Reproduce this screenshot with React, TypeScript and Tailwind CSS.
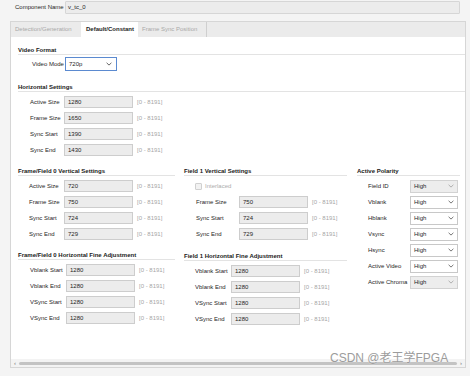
import React from "react"

const range = "[0 - 8191]"

function Chevron({ color = "#6b6b6b" }: { color?: string }) {
    return (
        <svg width="6" height="4" viewBox="0 0 6 4" className="shrink-0">
            <path d="M0.6 0.8 L3 3.1 L5.4 0.8" fill="none" stroke={color} strokeWidth="0.9" />
        </svg>
    )
}

function Title({ children, className = "" }: { children: React.ReactNode; className?: string }) {
    return (
        <div className={"h-[9px] leading-[8px] text-[6px] font-bold text-[#1a1a1a] border-b border-[#e3e3e3] whitespace-nowrap " + className}>
            {children}
        </div>
    )
}

function Field({ label, value, labelW, pl = "pl-[12px]" }: { label: string; value: string; labelW: string; pl?: string }) {
    return (
        <div className={"flex items-center h-[12px] " + pl}>
            <span className={"text-[6px] text-[#262626] whitespace-nowrap " + labelW}>{label}</span>
            <div className="w-[69px] h-[12px] bg-[#ececec] border border-[#cdcdcd] flex items-center pl-[3px] text-[6px] text-[#1e1e1e]">
                {value}
            </div>
            <span className="ml-[4px] text-[6px] text-[#a6a6a6] whitespace-nowrap">{range}</span>
        </div>
    )
}

function Polarity({ label, disabled }: { label: string; disabled?: boolean }) {
    return (
        <div className="flex items-center h-[12px] pl-[11px]">
            <span className="w-[42px] text-[6px] text-[#262626] whitespace-nowrap">{label}</span>
            <div
                className={
                    "w-[48px] h-[13px] border flex items-center justify-between pl-[3px] pr-[3px] text-[6px] text-[#1e1e1e] " +
                    (disabled ? "bg-[#ededed] border-[#d2d2d2]" : "bg-white border-[#c8c8c8]")
                }
            >
                <span>High</span>
                <Chevron color={disabled ? "#a8a8a8" : "#666"} />
            </div>
        </div>
    )
}

export default function App() {
    return (
        <div className="relative w-[470px] h-[376px] overflow-hidden bg-[#f4f4f4] font-['Liberation_Sans',Arial,sans-serif]">
            {/* component name */}
            <div className="flex items-center h-[14px] pl-[15px] pr-[10px]">
                <span className="w-[50px] text-[6px] text-[#262626] whitespace-nowrap">Component Name</span>
                <div className="flex-1 h-[13px] bg-[#ececec] border border-[#d6d6d6] rounded-[1px] flex items-center pl-[2px] text-[6px] text-[#1e1e1e]">
                    v_tc_0
                </div>
            </div>

            {/* tab panel */}
            <div className="mt-[7px] ml-[10px] w-[456px] border border-[#d6d6d6] bg-white">
                <div className="flex h-[15px] bg-[#ebebeb] text-[6px]">
                    <div className="w-[70px] flex items-center pl-[4px] text-[#a9a9a9] whitespace-nowrap">Detection/Generation</div>
                    <div className="w-[57px] flex items-center pl-[5px] bg-white font-bold text-[#1e1e1e] whitespace-nowrap">Default/Constant</div>
                    <div className="w-[69px] flex items-center pl-[4px] text-[#a9a9a9] border-r border-[#cfcfcf] whitespace-nowrap">Frame Sync Position</div>
                </div>

                <div className="h-[322px] pl-[7px] pt-[9px] flex flex-col">
                    <Title>Video Format</Title>
                    <div className="mt-[2px] flex items-center pl-[14px]">
                        <span className="w-[33px] text-[6px] text-[#262626] whitespace-nowrap">Video Mode</span>
                        <div className="w-[52px] h-[14px] border border-[#5b8ad0] bg-white flex items-center justify-between pl-[3px] pr-[4px] text-[6px] text-[#1e1e1e]">
                            <span>720p</span>
                            <Chevron color="#555" />
                        </div>
                    </div>

                    <Title className="mt-[12px]">Horizontal Settings</Title>
                    <div className="mt-[4px] flex flex-col gap-[4px]">
                        <Field label="Active Size" value="1280" labelW="w-[34px]" />
                        <Field label="Frame Size" value="1650" labelW="w-[34px]" />
                        <Field label="Sync Start" value="1390" labelW="w-[34px]" />
                        <Field label="Sync End" value="1430" labelW="w-[34px]" />
                    </div>

                    <div className="mt-[11px] flex gap-[9px]">
                        {/* column 1 */}
                        <div className="w-[157px] flex flex-col">
                            <Title>Frame/Field 0 Vertical Settings</Title>
                            <div className="mt-[4px] flex flex-col gap-[4px]">
                                <Field label="Active Size" value="720" labelW="w-[35px]" pl="pl-[11px]" />
                                <Field label="Frame Size" value="750" labelW="w-[35px]" pl="pl-[11px]" />
                                <Field label="Sync Start" value="724" labelW="w-[35px]" pl="pl-[11px]" />
                                <Field label="Sync End" value="729" labelW="w-[35px]" pl="pl-[11px]" />
                            </div>
                            <Title className="mt-[11px]">Frame/Field 0 Horizontal Fine Adjustment</Title>
                            <div className="mt-[4px] flex flex-col gap-[4px]">
                                <Field label="Vblank Start" value="1280" labelW="w-[36px]" />
                                <Field label="Vblank End" value="1280" labelW="w-[36px]" />
                                <Field label="VSync Start" value="1280" labelW="w-[36px]" />
                                <Field label="VSync End" value="1280" labelW="w-[36px]" />
                            </div>
                        </div>

                        {/* column 2 */}
                        <div className="w-[163px] flex flex-col">
                            <Title>Field 1 Vertical Settings</Title>
                            <div className="mt-[4px] flex flex-col gap-[4px]">
                                <div className="flex items-center h-[12px] pl-[11px] gap-[3px]">
                                    <div className="w-[7px] h-[7px] border border-[#d0d0d0] bg-[#f2f2f2] rounded-[1px]" />
                                    <span className="text-[6px] text-[#acacac]">Interlaced</span>
                                </div>
                                <Field label="Frame Size" value="750" labelW="w-[43px]" />
                                <Field label="Sync Start" value="724" labelW="w-[43px]" />
                                <Field label="Sync End" value="729" labelW="w-[43px]" />
                            </div>
                            <Title className="mt-[12px]">Field 1 Horizontal Fine Adjustment</Title>
                            <div className="mt-[4px] flex flex-col gap-[4px]">
                                <Field label="Vblank Start" value="1280" labelW="w-[36px]" pl="pl-[11px]" />
                                <Field label="Vblank End" value="1280" labelW="w-[36px]" pl="pl-[11px]" />
                                <Field label="VSync Start" value="1280" labelW="w-[36px]" pl="pl-[11px]" />
                                <Field label="VSync End" value="1280" labelW="w-[36px]" pl="pl-[11px]" />
                            </div>
                        </div>

                        {/* column 3 */}
                        <div className="ml-[1px] w-[103px] flex flex-col">
                            <Title>Active Polarity</Title>
                            <div className="mt-[4px] flex flex-col gap-[4px]">
                                <Polarity label="Field ID" disabled />
                                <Polarity label="Vblank" />
                                <Polarity label="Hblank" />
                                <Polarity label="Vsync" />
                                <Polarity label="Hsync" />
                                <Polarity label="Active Video" />
                                <Polarity label="Active Chroma" disabled />
                            </div>
                        </div>
                    </div>
                </div>

                {/* horizontal scrollbar */}
                <div className="h-[8px] bg-[#f3f3f3] flex items-center pl-[3px] pr-[3px] gap-[3px]">
                    <span className="text-[6px] leading-[6px] text-[#777]">‹</span>
                    <div className="flex-1 h-[3px] rounded-full bg-[#c3c3c3]" />
                    <span className="text-[6px] leading-[6px] text-[#777]">›</span>
                </div>
            </div>

            {/* watermark */}
            <div className="absolute left-[330px] top-[351px] text-[12px] leading-[14px] text-[#9c9c9c] whitespace-nowrap [text-shadow:0_0_1px_#ffffff] font-['Liberation_Sans','Noto_Sans_CJK_SC',sans-serif]">
                CSDN @老王学FPGA
            </div>
        </div>
    )
}
